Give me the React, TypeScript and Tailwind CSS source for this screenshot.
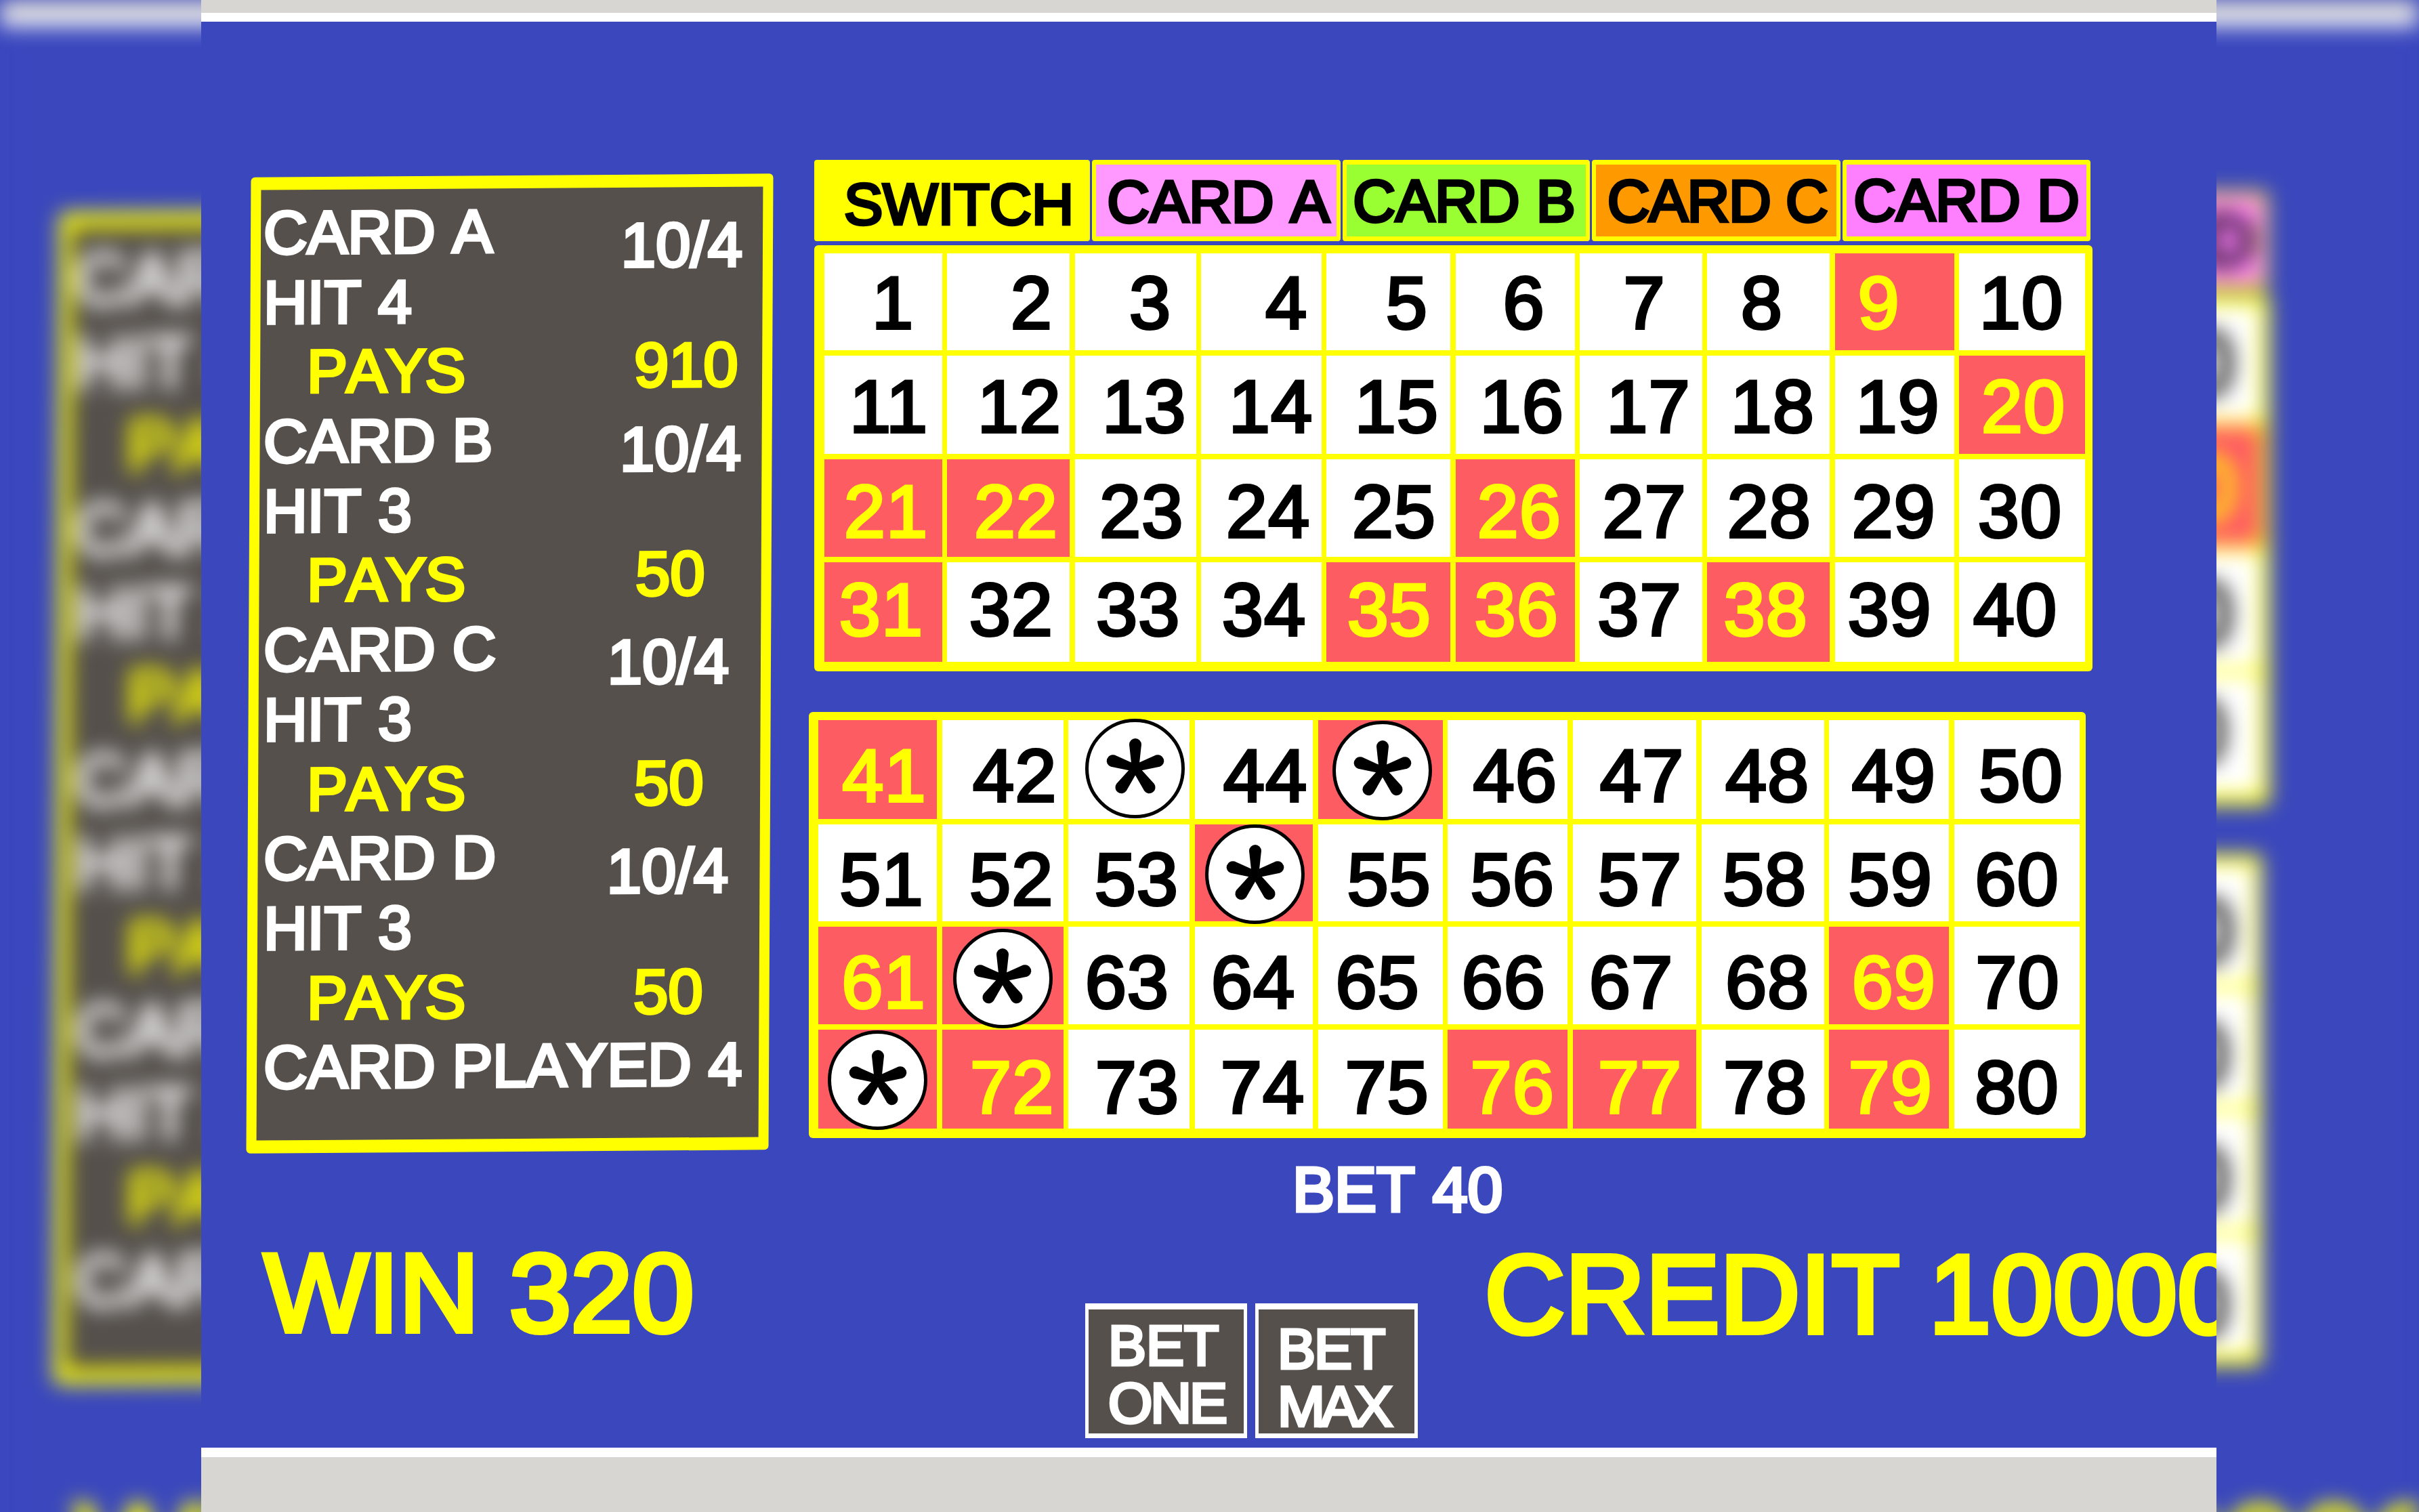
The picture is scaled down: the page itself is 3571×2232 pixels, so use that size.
import React from 'react';

// [dx, dy] nudges of each number from the middle of its cell, read off the screenshot
const topDx = [
  14, 34, 22, 37, 27, 13, 5, -10, -23, -1,
  8, 16, 13, 14, 12, 10, 11, 6, 5, 2,
  4, 11, 9, 10, 8, 6, 5, 1, -1, -3,
  -3, 4, 4, 4, 1, 2, -2, -4, -7, -10,
];
const topDy = [1, 2, 5, -4];

const lowerDx = [
  10, 18, 9, 17, 3, 11, 11, 7, 7, 6,
  6, 13, 11, 2, 13, 7, 8, 3, 2, 0,
  9, 0, -3, -1, -4, -6, -5, 7, 7, 1,
  0, 14, 12, 13, 10, 7, 8, 4, 2, 0,
];
const lowerDy = [9, 9, 10, 12];

const topHits = [9, 20, 21, 22, 26, 31, 35, 36, 38];
const lowerHits = [41, 45, 54, 61, 62, 69, 71, 72, 76, 77, 79];

// balls drawn on the lower card: number -> dy of the ball
const balls: Record<number, number> = { 43: -2, 45: 1, 54: 2, 62: 4, 71: 1 };

interface PayRow {
  label: string;
  indent?: boolean;
  value?: string;
  valueClass?: string;
}

const payRows: PayRow[] = [
  { label: 'CARD A', value: '10/4', valueClass: 'ml-[528px] mt-[22px] text-white' },
  { label: 'HIT 4' },
  { label: 'PAYS', indent: true, value: '910', valueClass: 'ml-[547px] -mt-[6px] text-[#ffff00]' },
  { label: 'CARD B', value: '10/4', valueClass: 'ml-[526px] mt-[15px] text-white' },
  { label: 'HIT 3' },
  { label: 'PAYS', indent: true, value: '50', valueClass: 'ml-[549px] -mt-[6px] text-[#ffff00]' },
  { label: 'CARD C', value: '10/4', valueClass: 'ml-[508px] mt-[21px] text-white' },
  { label: 'HIT 3' },
  { label: 'PAYS', indent: true, value: '50', valueClass: 'ml-[547px] -mt-[6px] text-[#ffff00]' },
  { label: 'CARD D', value: '10/4', valueClass: 'ml-[507px] mt-[22px] text-white' },
  { label: 'HIT 3' },
  { label: 'PAYS', indent: true, value: '50', valueClass: 'ml-[546px] -mt-[6px] text-[#ffff00]' },
  { label: 'CARD PLAYED 4' },
];

function PayTable() {
  return (
    <div className="mt-[23px] ml-[70px] h-[1441px] w-[771px] shrink-0 -skew-x-[0.28deg] -skew-y-[0.4deg] rounded-[6px] border-x-[15px] border-y-[19px] border-[#ffff00] bg-[#55504c] pt-[12px] pl-[4px] text-[89.5px] leading-[102.7px] [font-kerning:none] [-webkit-text-stroke:4.5px_currentcolor]">
      {payRows.map((row, i) => (
        <div key={i} className="relative flex h-[102.7px] whitespace-nowrap" style={{ marginLeft: i * 0.5 }}>
          <span className={row.indent ? 'pl-[64px] text-[#ffff00] tracking-[-1.5px]' : 'text-white'}>{row.label}</span>
          {row.value && (
            <span className={`absolute top-0 left-0 text-[92px] tracking-normal ${row.valueClass}`}>{row.value}</span>
          )}
        </div>
      ))}
    </div>
  );
}

function Asterisk() {
  return (
    <svg viewBox="-50 -50 100 100" className="h-[100px] w-[100px]">
      {[0, 72, 144, 216, 288].map((deg) => (
        <path
          key={deg}
          transform={`rotate(${deg})`}
          d="M-5 2 L-9 -35 A9 9 0 0 1 9 -35 L5 2 Z"
          fill="#000"
        />
      ))}
    </svg>
  );
}

function Cell({ n, hit, dx, dy }: { n: number; hit: boolean; dx: number; dy: number }) {
  const ball = balls[n];
  return (
    <div className={`flex items-center justify-center ${hit ? 'bg-[#fe5c63]' : 'bg-white'}`}>
      {ball !== undefined ? (
        <div
          className="z-10 flex h-[147px] w-[147px] shrink-0 items-center justify-center rounded-full border-[5px] border-black bg-white"
          style={{ marginLeft: dx * 2, marginTop: ball * 2 }}
        >
          <Asterisk />
        </div>
      ) : (
        <span
          className={`text-[110px] leading-none tracking-[1px] [-webkit-text-stroke:4px_currentcolor] ${hit ? 'text-[#ffff00]' : 'text-black'}`}
          style={{ marginLeft: dx * 2, marginTop: dy * 2 }}
        >
          {n}
        </span>
      )}
    </div>
  );
}

function TopCard() {
  return (
    <div className="mt-[6px] grid h-[629px] w-[1887px] grid-cols-[174px_181px_179px_178px_183px_176px_181px_181px_176px_186px] grid-rows-[143px_145px_144px_147px] gap-x-[7.33px] gap-y-[8px] rounded-[6px] bg-[#ffff00] pt-[12px] pl-[15px]">
      {topDx.map((dx, i) => (
        <Cell key={i} n={i + 1} hit={topHits.includes(i + 1)} dx={dx} dy={topDy[Math.floor(i / 10)]} />
      ))}
    </div>
  );
}

function LowerCard() {
  return (
    <div className="mt-[60px] -ml-[8px] grid h-[629px] w-[1885px] grid-cols-[175px_179px_179px_174px_184px_177px_182px_181px_177px_185px] grid-rows-[146px_143px_144px_146px] gap-x-[7.67px] gap-y-[8px] rounded-[6px] bg-[#ffff00] pt-[12px] pl-[14px]">
      {lowerDx.map((dx, i) => (
        <Cell key={i} n={i + 41} hit={lowerHits.includes(i + 41)} dx={dx} dy={lowerDy[Math.floor(i / 10)]} />
      ))}
    </div>
  );
}

function Tabs() {
  return (
    <div className="flex h-[120px] gap-[3px] text-[87px] leading-none text-black [font-kerning:none] [-webkit-text-stroke:4.5px_currentcolor]">
      <div className="flex w-[407px] items-center justify-center rounded-[4px] bg-[#ffff00] pt-[10px] pl-[20px] text-[86px]">
        SWITCH
      </div>
      <div className="flex w-[367px] items-center justify-center rounded-[4px] border-x-[6px] border-y-[7px] border-[#ffff00] bg-[#ff99ff] pt-[2px] pl-[6px] whitespace-nowrap">
        CARD A
      </div>
      <div className="flex w-[365px] items-center justify-center rounded-[4px] border-x-[6px] border-y-[7px] border-[#ffff00] bg-[#99ff33] pr-[6px] whitespace-nowrap">
        CARD B
      </div>
      <div className="flex w-[367px] items-center justify-center rounded-[4px] border-x-[6px] border-y-[7px] border-[#ffff00] bg-[#ff9900] pl-[3px] tracking-[-1.5px] whitespace-nowrap">
        CARD C
      </div>
      <div className="flex w-[366px] items-center justify-center rounded-[4px] border-x-[6px] border-y-[7px] border-[#ffff00] bg-[#ff80ff] pb-[2px] whitespace-nowrap">
        CARD D
      </div>
    </div>
  );
}

function BetButtons() {
  return (
    <div className="mt-[121px] flex w-[491px] shrink-0 gap-[12px] text-[84px] leading-[85px] tracking-normal text-white [font-kerning:none] [-webkit-text-stroke:4.5px_currentcolor]">
      <div className="h-[199px] w-[239px] border-x-[5px] border-t-[9px] border-b-[7px] border-white bg-[#55504c] pt-[11px] pl-[29px]">
        <div>BET</div>
        <div className="tracking-[-3px]">ONE</div>
      </div>
      <div className="h-[199px] w-[240px] border-x-[5px] border-t-[9px] border-b-[7px] border-white bg-[#55504c] pt-[16px] pl-[28px]">
        <div className="tracking-[-2px]">BET</div>
        <div className="tracking-[-6px]">MAX</div>
      </div>
    </div>
  );
}

// One full game screen. Drawn sharp in the middle and again, enlarged and blurred, behind it.
function GameScreen() {
  return (
    <div className="flex h-[2232px] w-[2975px] flex-col overflow-hidden bg-[#d7d6d2] font-['Liberation_Sans',Arial,sans-serif]">
      <div className="mt-[19px] h-[13px] shrink-0 bg-white" />
      <div className="h-[2105px] shrink-0 bg-[#3a47bd] pt-[204px]">
        <div className="flex h-[1464px]">
          <PayTable />
          <div className="ml-[64px] flex flex-col">
            <Tabs />
            <TopCard />
            <LowerCard />
          </div>
        </div>

        <div className="mt-[10px] pl-[1611px] text-[93px] leading-none text-white [font-kerning:none] [-webkit-text-stroke:5px_currentcolor]">
          BET 40
        </div>

        <div className="flex items-start whitespace-nowrap text-[163px] leading-none text-[#ffff00] [-webkit-text-stroke:8px_currentcolor]">
          <div className="mt-[24px] ml-[93px] w-[1212px] shrink-0">WIN 320</div>
          <BetButtons />
          <div className="mt-[26px] ml-[99px] shrink-0 tracking-[1px]">CREDIT 10000</div>
        </div>
      </div>
      <div className="h-[14px] shrink-0 bg-white" />
    </div>
  );
}

export default function App() {
  return (
    <div className="relative h-[2232px] w-[3571px] overflow-hidden bg-[#3a47bd]">
      {/* Blurred backdrop */}
      <div className="absolute top-0 left-0 origin-top-left scale-[1.2] blur-[13px]" aria-hidden="true">
        <GameScreen />
      </div>

      <div className="relative ml-[297px] w-[2975px]">
        <GameScreen />
      </div>
    </div>
  );
}
